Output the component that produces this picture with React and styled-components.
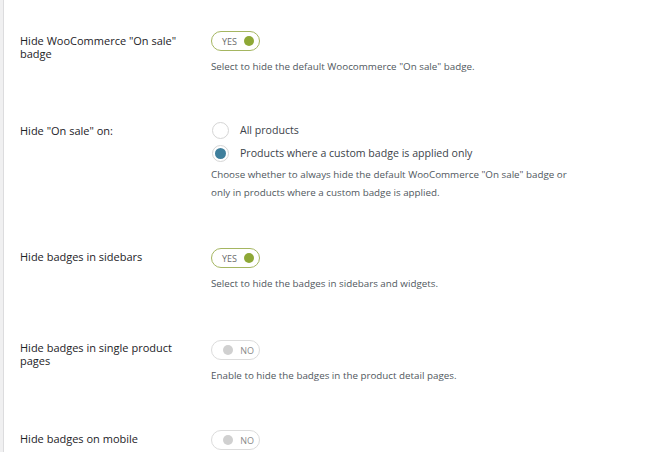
import React from "react";
import styled, { createGlobalStyle } from "styled-components";

const Global = createGlobalStyle`
  html, body { margin: 0; padding: 0; background: #fff; }
  body { font-family: "Open Sans", "Noto Sans", sans-serif; }
`;

const Page = styled.div`
  display: flex;
  height: 452px;
  overflow: hidden;
`;

const Strip = styled.div`
  width: 3px;
  background: #f0f0f1;
  border-right: 1px solid #dcdcde;
  flex-shrink: 0;
`;

const Table = styled.div`
  flex: 1;
  display: flex;
  flex-direction: column;
  padding-top: 8px;
`;

const Row = styled.div`
  display: grid;
  grid-template-columns: 191px 1fr;
  padding-left: 16px;
  padding-bottom: ${(p) => p.$bottom ?? 46}px;
`;

const Label = styled.div`
  font-size: 11px;
  line-height: 13px;
  color: #1d2327;
  padding-top: ${(p) => p.$top ?? 2}px;
  padding-right: 20px;
`;

const Cell = styled.div`
  display: flex;
  flex-direction: column;
  padding-top: ${(p) => p.$top ?? 0}px;
`;

const Toggle = styled.div`
  box-sizing: border-box;
  width: 49px;
  height: 20px;
  border-radius: 10px;
  border: 1px solid ${(p) => (p.$on ? "#a5b661" : "#dcdcdc")};
  display: flex;
  align-items: center;
  flex-direction: ${(p) => (p.$on ? "row" : "row-reverse")};
  justify-content: space-between;
  padding: 0 5px 0 ${(p) => (p.$on ? 10 : 11)}px;
  font-size: 9px;
  color: ${(p) => (p.$on ? "#6b6b6b" : "#8a8a8a")};
`;

const Dot = styled.span`
  width: 10px;
  height: 10px;
  border-radius: 50%;
  background: ${(p) => (p.$on ? "#8ea836" : "#d0d0d0")};
`;

const Desc = styled.div`
  margin-top: ${(p) => p.$gap ?? 7}px;
  font-size: 9.8px;
  line-height: 18px;
  color: #50575e;
  max-width: 372px;
`;

const RadioList = styled.div`
  display: flex;
  flex-direction: column;
  gap: 3px;
`;

const RadioRow = styled.label`
  display: flex;
  align-items: center;
  gap: 11px;
  height: 20px;
  font-size: 10.6px;
  color: #3c434a;
`;

const RadioCircle = styled.span`
  box-sizing: border-box;
  width: 17px;
  height: 17px;
  border-radius: 50%;
  border: 1px solid #d5d5d5;
  display: flex;
  align-items: center;
  justify-content: center;
  margin-left: 1px;
  &::after {
    content: "";
    width: 11px;
    height: 11px;
    border-radius: 50%;
    background: ${(p) => (p.$checked ? "#3f7f9c" : "transparent")};
  }
`;

const Switch = ({ on }) => (
  <Toggle $on={on}>
    {on ? "YES" : "NO"}
    <Dot $on={on} />
  </Toggle>
);

export default function App() {
  return (
    <>
      <Global />
      <Page>
        <Strip />
        <Table>
          <Row $bottom={44}>
            <Label $top={26}>Hide WooCommerce "On sale" badge</Label>
            <Cell $top={23}>
              <Switch on />
              <Desc>Select to hide the default Woocommerce "On sale" badge.</Desc>
            </Cell>
          </Row>
          <Row>
            <Label $top={4}>Hide "On sale" on:</Label>
            <Cell>
              <RadioList>
                <RadioRow>
                  <RadioCircle />
                  All products
                </RadioRow>
                <RadioRow>
                  <RadioCircle $checked />
                  Products where a custom badge is applied only
                </RadioRow>
              </RadioList>
              <Desc $gap={3}>
                Choose whether to always hide the default WooCommerce "On sale" badge or only in products where a custom badge is applied.
              </Desc>
            </Cell>
          </Row>
          <Row $bottom={47}>
            <Label $top={2}>Hide badges in sidebars</Label>
            <Cell>
              <Switch on />
              <Desc>Select to hide the badges in sidebars and widgets.</Desc>
            </Cell>
          </Row>
          <Row $bottom={45}>
            <Label $top={1}>Hide badges in single product pages</Label>
            <Cell>
              <Switch />
              <Desc>Enable to hide the badges in the product detail pages.</Desc>
            </Cell>
          </Row>
          <Row>
            <Label $top={2}>Hide badges on mobile</Label>
            <Cell>
              <Switch />
            </Cell>
          </Row>
        </Table>
      </Page>
    </>
  );
}
